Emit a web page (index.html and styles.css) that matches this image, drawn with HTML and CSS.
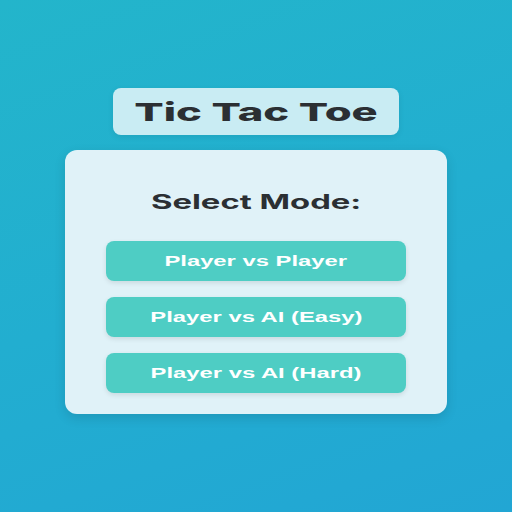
FILE: index.html
```html
<!DOCTYPE html>
<html lang="en">
<head>
    <meta charset="UTF-8">
    <meta name="viewport" content="width=device-width, initial-scale=1.0">
    <title>Tic Tac Toe</title>
    <link rel="stylesheet" href="styles.css">
</head>
<body>
    <main class="app">
        <h1 class="title"><span class="wide title-text">Tic Tac Toe</span></h1>
        <div class="mode-card">
            <h2 class="mode-title"><span class="wide mode-title-text">Select Mode:</span></h2>
            <div class="mode-list">
                <button class="mode-btn"><span class="wide btn-text">Player vs Player</span></button>
                <button class="mode-btn"><span class="wide btn-text">Player vs AI (Easy)</span></button>
                <button class="mode-btn"><span class="wide btn-text">Player vs AI (Hard)</span></button>
            </div>
        </div>
    </main>
</body>
</html>
```

FILE: styles.css
```css
body {
    margin: 0;
    padding: 0;
    height: 512px;
    font-family: "Liberation Sans", Arial, sans-serif;
    background: linear-gradient(160deg, #23b5cb 0%, #22aed0 50%, #22a6d4 100%);
}
.app {
    display: flex;
    flex-direction: column;
    align-items: center;
    padding-top: 88px;
}
/* wide lettering: text is stretched sideways */
.wide {
    display: inline-block;
    white-space: nowrap;
    transform-origin: center;
}
.title {
    margin: 0 0 15px;
    width: 286px;
    height: 47px;
    box-sizing: border-box;
    display: flex;
    align-items: center;
    justify-content: center;
    background-color: #c9ecf3;
    border-radius: 8px;
    font-family: Inter, "Noto Sans", sans-serif;
    font-weight: 800;
    font-size: 25px;
    color: #2b2f33;
    box-shadow: 0 2px 6px rgba(0, 0, 0, 0.08);
}
.title-text {
    transform: scaleX(1.74);
}
.mode-card {
    width: 382px;
    height: 264px;
    box-sizing: border-box;
    padding: 38px 41px 21px;
    background-color: #e0f2f8;
    border-radius: 12px;
    box-shadow: 0 4px 12px rgba(0, 0, 0, 0.12);
}
.mode-title {
    margin: 0 0 25px;
    text-align: center;
    font-family: Inter, "Noto Sans", sans-serif;
    font-weight: 700;
    font-size: 20px;
    line-height: 28px;
    color: #2b2f33;
}
.mode-title-text {
    transform: scaleX(1.64);
}
.mode-list {
    display: flex;
    flex-direction: column;
    gap: 16px;
}
.mode-btn {
    height: 40px;
    border: none;
    border-radius: 8px;
    background-color: #4ecdc4;
    color: white;
    font-family: "Liberation Sans", Arial, sans-serif;
    font-weight: bold;
    font-size: 14px;
    cursor: pointer;
    box-shadow: 0 2px 5px rgba(0, 0, 0, 0.1);
}
.btn-text {
    transform: scaleX(1.7);
}
.mode-btn:hover {
    background-color: #45b8b0;
}
```
